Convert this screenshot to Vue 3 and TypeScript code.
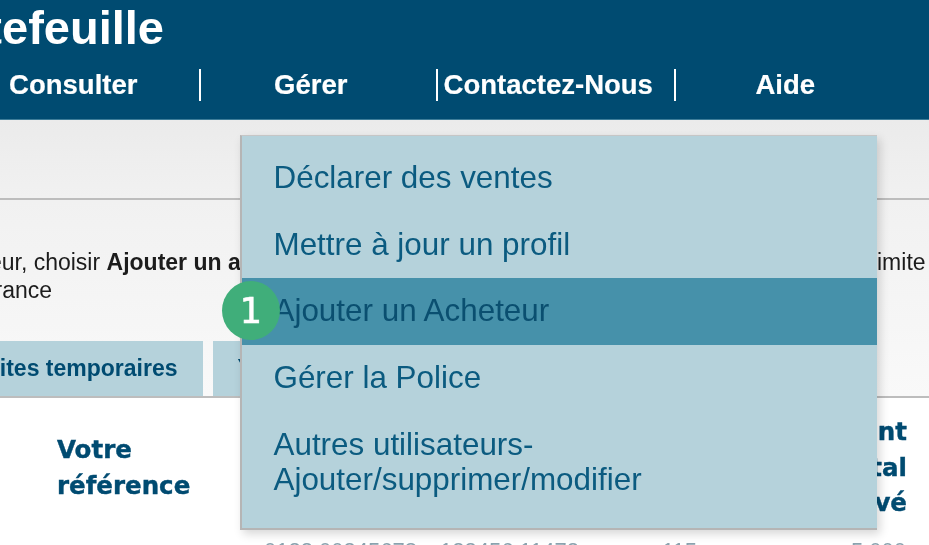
<script setup lang="ts">
const nav: string[] = ['Consulter', 'Gérer', 'Contactez-Nous', 'Aide']
const items: { label: string; active?: boolean }[] = [
  { label: 'Déclarer des ventes' },
  { label: 'Mettre à jour un profil' },
  { label: 'Ajouter un Acheteur', active: true },
  { label: 'Gérer la Police' },
  { label: 'Autres utilisateurs-\nAjouter/supprimer/modifier' },
]
</script>

<template>
  <div class="page">
    <header class="header">
      <h1 class="title">Portefeuille</h1>
      <nav class="nav">
        <a v-for="n in nav" :key="n" class="nav-item">{{ n }}</a>
      </nav>
    </header>
    <div class="sub"></div>
    <section class="intro">
      <div class="intro-text">
        <p class="line one">Pour ajouter un acheteur, choisir <b>Ajouter un acheteur</b></p>
        <p class="line limite">imite</p>
        <p class="line two">assurance</p>
      </div>
      <div class="tabs">
        <div class="tab first">Limites temporaires</div>
        <div class="tab second">Y</div>
      </div>
    </section>
    <section class="table">
      <div class="col-ref">Votre<br />référence</div>
      <div class="col-amt">Montant<br />total<br />approuvé</div>
    </section>
    <div class="row-clip">
      <span class="row-a">0123 00345678</span><span class="row-b">123456 11472</span><span class="row-c">115</span><span class="row-d">5 000</span>
    </div>
    <div class="menu">
      <a v-for="i in items" :key="i.label" class="menu-item" :class="{ active: i.active }">{{ i.label }}</a>
    </div>
    <div class="badge">1</div>
  </div>
</template>

<style>
html, body { margin: 0; padding: 0; background: #fff; }
</style>

<style scoped>
.page {
  position: relative;
  width: 929px;
  height: 545px;
  overflow: hidden;
  font-family: "Liberation Sans", Arial, sans-serif;
  background: #fff;
  filter: blur(0.35px);
}
.header {
  height: 119px;
  background: #004b71;
  border-bottom: 1px solid #3d7d99;
  color: #fff;
  display: flex;
  flex-direction: column;
}
.title {
  margin: 0 0 0 -92px;
  font-size: 47px;
  line-height: 56px;
  font-weight: 700;
  white-space: nowrap;
}
.nav {
  display: grid;
  grid-template-columns: repeat(4, 237.5px);
  margin: 13px 0 0 -37px;
  height: 31px;
}
.nav-item {
  display: flex;
  align-items: center;
  justify-content: center;
  padding-right: 15px;
  font-size: 27.5px;
  font-weight: 700;
  -webkit-text-stroke: 0.2px #fff;
  border-right: 2px solid #fff;
  box-sizing: border-box;
  white-space: nowrap;
}
.nav-item:last-child { border-right: 0; padding-right: 18px; }
.sub {
  height: 78px;
  background: linear-gradient(#ebebeb, #f1f1f1);
  border-bottom: 2px solid #bdbdbd;
}
.intro {
  height: 196px;
  background: linear-gradient(#f1f1f1, #f9f9f9);
  border-bottom: 2px solid #bdbdbd;
  position: relative;
  display: flex;
  flex-direction: column;
  justify-content: space-between;
}
.intro-text { font-size: 23px; line-height: 28px; color: #1c1c1c; padding-top: 48px; position: relative; }
.line { margin: 0; white-space: nowrap; }
.one { margin-left: -231px; }
.two { margin-left: -54px; }
.limite { position: absolute; left: 877px; top: 48px; }
.tabs { display: flex; gap: 10px; margin-left: -100px; height: 55px; }
.tab {
  background: #b5d2db;
  color: #004b71;
  font-size: 23px;
  font-weight: 700;
  display: flex;
  align-items: center;
  white-space: nowrap;
  box-sizing: border-box;
}
.first { width: 302.5px; justify-content: flex-end; padding-right: 25px; }
.second { width: 300px; padding-left: 25px; }
.table {
  height: 126px;
  position: relative;
  color: #004b71;
  font-family: "DejaVu Sans", sans-serif;
  font-weight: 700;
  font-size: 24.5px;
  line-height: 35.5px;
  -webkit-text-stroke: 0.4px #004b71;
}
.col-ref { position: absolute; left: 57px; top: 34px; }
.col-amt { position: absolute; right: 22px; top: 16px; white-space: nowrap; text-align: right; }
.row-clip { position: relative; height: 20px; color: #8aa2ae; font-size: 22px; white-space: nowrap; }
.row-a { position: absolute; left: 264px; top: 14px; }
.row-b { position: absolute; left: 440px; top: 14px; }
.row-c { position: absolute; left: 662px; top: 14px; }
.row-d { position: absolute; left: 851px; top: 14px; }
.menu {
  position: absolute;
  left: 240px;
  top: 135px;
  width: 637px;
  height: 395px;
  box-sizing: border-box;
  padding-top: 8px;
  background: #b5d2db;
  border-top: 1px solid #c6c6c6;
  border-left: 2px solid #b5b5b5;
  border-bottom: 2px solid #b5b5b5;
  box-shadow: 3px 4px 9px rgba(0,0,0,.16);
  display: flex;
  flex-direction: column;
}
.menu-item {
  min-height: 67px;
  box-sizing: border-box;
  padding: 16px 32px 0 31.5px;
  font-size: 31.4px;
  line-height: 35px;
  color: #0b5b80;
  white-space: pre-line;
}
.menu-item.active { background: #4691aa; padding-top: 15px; color: #0a4f70; }
.menu-item:nth-child(n+4) { padding-top: 14.5px; }
.badge {
  position: absolute;
  left: 222px;
  top: 281px;
  width: 58px;
  height: 59px;
  border-radius: 50%;
  background: #40ae7a;
  color: #fff;
  display: flex;
  align-items: center;
  justify-content: center;
  font-family: "DejaVu Sans", sans-serif;
  font-weight: 400;
  font-size: 35px;
  -webkit-text-stroke: 0.6px #fff;
}
</style>
